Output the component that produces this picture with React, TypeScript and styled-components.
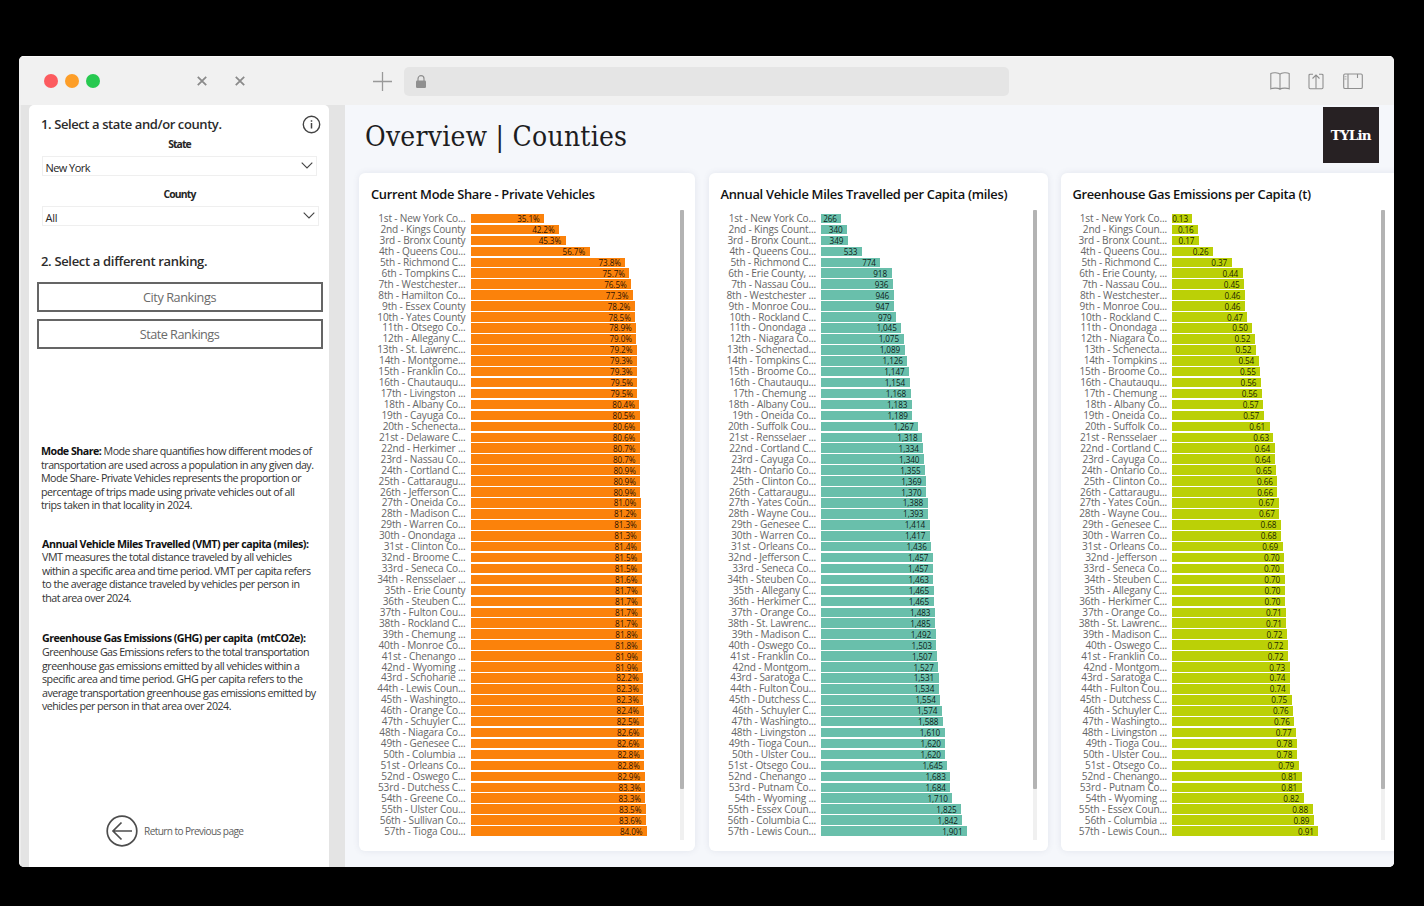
import { useLayoutEffect, useRef, useState } from 'react'
import type { ReactNode } from 'react'
import styled, { createGlobalStyle } from 'styled-components'

const GlobalStyle = createGlobalStyle`
  * {
    box-sizing: border-box;
  }

  body {
    margin: 0;
    background: #000;
    font-family: 'Open Sans', 'Noto Sans', sans-serif;
  }
`

const Desktop = styled.div`
  height: 906px;
  padding: 56px 30px 39px 19px;
  overflow: hidden;
  background: #000;
`

const BrowserWindow = styled.div`
  display: flex;
  flex-direction: column;
  width: 1375px;
  height: 811px;
  border-radius: 5px;
  overflow: hidden;
  background: #f1f1f1;
`

const Toolbar = styled.header`
  display: flex;
  align-items: center;
  flex: none;
  height: 49px;
  padding: 0 31.5px 0 25px;
  background: #f1f1f1;
  border-top: 1px solid #fafafa;
`

const Lights = styled.div`
  display: flex;
  gap: 7px;
  width: 153px;
`

const Light = styled.span<{ $color: string }>`
  width: 14px;
  height: 14px;
  border-radius: 50%;
  background: ${(p) => p.$color};
`

const TabMarks = styled.div`
  display: flex;
  gap: 27.5px;
  width: 176px;
`

const AddressBar = styled.div`
  display: flex;
  align-items: center;
  width: 605px;
  height: 29px;
  margin-left: 12px;
  padding-left: 12px;
  border-radius: 5px;
  background: #e5e5e5;
`

const ToolIcons = styled.div`
  display: flex;
  align-items: center;
  gap: 18.5px;
  margin-left: auto;
`

const Body = styled.div`
  display: flex;
  flex: 1;
  min-height: 0;
  padding-left: 2px;
  background: #ededed;
`

const Gutter = styled.div`
  display: flex;
  flex: none;
  width: 324px;
  padding-left: 8px;
  background: #e4e4e4;
`

const Sidebar = styled.aside`
  width: 300px;
  padding: 9px 0 0 12px;
  border-radius: 5px 5px 0 0;
  background: #fff;
`

const StepRow = styled.div<{ $top?: number }>`
  display: flex;
  align-items: center;
  justify-content: space-between;
  height: 20px;
  margin-top: ${(p) => p.$top ?? 0}px;
  padding-right: 8px;
  font-size: 13px;
  font-weight: 600;
  color: #2b2b2b;
`

const FieldLabel = styled.div<{ $top: number }>`
  display: flex;
  justify-content: center;
  width: 277px;
  height: 14px;
  margin-top: ${(p) => p.$top}px;
  font-size: 10.4px;
  line-height: 14px;
  font-weight: 700;
  color: #252525;
`

const SelectBox = styled.div<{ $top: number; $width: number }>`
  display: flex;
  align-items: center;
  justify-content: space-between;
  width: ${(p) => p.$width}px;
  height: 20px;
  margin-top: ${(p) => p.$top}px;
  margin-left: 1px;
  padding: 2px 3px 0 2.5px;
  border: 1px solid #efefef;
  font-size: 11px;
  color: #252525;

  svg {
    margin-top: -3px;
  }
`

const RankingButtons = styled.div`
  display: flex;
  flex-direction: column;
  gap: 7px;
  width: 286px;
  margin: 11px 0 0 -4.5px;
`

const RankingButton = styled.button`
  display: flex;
  align-items: center;
  justify-content: center;
  height: 30px;
  padding: 0;
  border: 2px solid #656565;
  background: #fff;
  font-family: inherit;
  font-size: 12.7px;
  color: #6b6b6b;
`

const Definition = styled.div<{ $top: number; $indent?: number }>`
  margin-top: ${(p) => p.$top}px;
  margin-left: ${(p) => p.$indent ?? 0}px;
  font-size: 10.7px;
  line-height: 13.6px;
  color: #333;

  b {
    color: #111;
  }
`

const DefinitionLine = styled.div`
  height: 13.6px;
  white-space: pre;
`

const BackLink = styled.div`
  display: flex;
  align-items: center;
  gap: 6px;
  margin: 101px 0 0 65px;
  font-size: 10.1px;
  color: #606060;
`

const Main = styled.main`
  flex: 1;
  min-width: 0;
  padding-left: 14px;
  background: #f5f7fb;
`

const PageHeader = styled.div`
  display: flex;
  justify-content: space-between;
  height: 68px;
  padding: 2px 15.5px 0 6px;
`

const PageTitle = styled.h1`
  margin: 0;
  font-family: 'DejaVu Serif Condensed', 'DejaVu Serif', serif;
  font-stretch: condensed;
  font-size: 28px;
  line-height: 59px;
  font-weight: 400;
  color: #1d1d1f;
`

const Logo = styled.div`
  display: flex;
  align-items: center;
  justify-content: center;
  width: 55.5px;
  height: 56px;
  background: #272123;
  color: #fff;
  font-family: 'DejaVu Serif', serif;
  font-size: 13.5px;
  font-weight: 700;
`

const Panels = styled.div`
  display: flex;
  width: 1064px;
`

const Panel = styled.section<{ $width: number; $gap: number }>`
  flex: none;
  width: ${(p) => p.$width}px;
  height: 678px;
  margin-right: ${(p) => p.$gap}px;
  padding: 11px 0 0 12px;
  border-radius: 6px;
  background: #fff;
  box-shadow: 0 0 6px rgba(90, 100, 130, 0.12);
`

const PanelTitle = styled.h2`
  height: 20px;
  margin: 0;
  font-size: 12.9px;
  line-height: 20px;
  font-weight: 600;
  color: #111;
`

const ChartArea = styled.div`
  display: flex;
  justify-content: space-between;
  height: 630px;
  margin-top: 6px;
`

const Rows = styled.div`
  padding-top: 3.1px;
`

const Row = styled.div<{ $label: number }>`
  display: grid;
  grid-template-columns: ${(p) => p.$label}px 200px;
  column-gap: 5px;
  align-items: center;
  height: 10.945px;
`

const RowLabel = styled.span`
  overflow: visible;
  text-align: right;
  white-space: pre;
  font-size: 10.1px;
  line-height: 10.9px;
  letter-spacing: -0.16px;
  color: #666;
`

const Bar = styled.div<{ $color: string }>`
  display: flex;
  align-items: center;
  justify-content: flex-end;
  height: 9.6px;
  padding-right: 4.5px;
  background: ${(p) => p.$color};
  font-size: 8.2px;
  line-height: 9px;
  letter-spacing: -0.1px;
  color: rgba(0, 0, 0, 0.88);
`

const Track = styled.div<{ $right: number }>`
  width: 4px;
  height: 630px;
  margin-right: ${(p) => p.$right}px;
  background: #f0f0f0;
`

const Thumb = styled.div`
  height: 579px;
  border-radius: 1px;
  background: #b3b3b3;
`

// Spreads the letters so that the text takes exactly the given width.
const Fitted = styled.span`
  display: inline-block;
  white-space: pre;
`

const Fit = ({ width, children }: { width: number; children: ReactNode }) => {
  const ref = useRef<HTMLSpanElement>(null)
  const [spacing, setSpacing] = useState(0)

  useLayoutEffect(() => {
    const el = ref.current
    if (!el) return
    const gaps = (el.textContent ?? '').length - 1
    setSpacing((width - el.getBoundingClientRect().width) / gaps)
  }, [width])

  return (
    <Fitted ref={ref} style={{ letterSpacing: spacing }}>
      {children}
    </Fitted>
  )
}

const modeShare: [string, number][] = [
  ['1st - New York Co...', 35.1],
  ['2nd - Kings County', 42.2],
  ['3rd - Bronx County', 45.3],
  ['4th - Queens Cou...', 56.7],
  ['5th - Richmond C...', 73.8],
  ['6th - Tompkins C...', 75.7],
  ['7th - Westchester...', 76.5],
  ['8th - Hamilton Co...', 77.3],
  ['9th - Essex County', 78.2],
  ['10th - Yates County', 78.5],
  ['11th - Otsego Co...', 78.9],
  ['12th - Allegany C...', 79.0],
  ['13th - St. Lawrenc...', 79.2],
  ['14th - Montgome...', 79.3],
  ['15th - Franklin Co...', 79.3],
  ['16th - Chautauqu...', 79.5],
  ['17th - Livingston ...', 79.5],
  ['18th - Albany Co...', 80.4],
  ['19th - Cayuga Co...', 80.5],
  ['20th - Schenecta...', 80.6],
  ['21st - Delaware C...', 80.6],
  ['22nd - Herkimer ...', 80.7],
  ['23rd - Nassau Co...', 80.7],
  ['24th - Cortland C...', 80.9],
  ['25th - Cattaraugu...', 80.9],
  ['26th - Jefferson C...', 80.9],
  ['27th - Oneida Co...', 81.0],
  ['28th - Madison C...', 81.2],
  ['29th - Warren Co...', 81.3],
  ['30th - Onondaga ...', 81.3],
  ['31st - Clinton Co...', 81.4],
  ['32nd - Broome C...', 81.5],
  ['33rd - Seneca Co...', 81.5],
  ['34th - Rensselaer ...', 81.6],
  ['35th - Erie County', 81.7],
  ['36th - Steuben C...', 81.7],
  ['37th - Fulton Cou...', 81.7],
  ['38th - Rockland C...', 81.7],
  ['39th - Chemung ...', 81.8],
  ['40th - Monroe Co...', 81.8],
  ['41st - Chenango ...', 81.9],
  ['42nd - Wyoming ...', 81.9],
  ['43rd - Schoharie ...', 82.2],
  ['44th - Lewis Coun...', 82.3],
  ['45th - Washingto...', 82.3],
  ['46th - Orange Co...', 82.4],
  ['47th - Schuyler C...', 82.5],
  ['48th - Niagara Co...', 82.6],
  ['49th - Genesee C...', 82.6],
  ['50th - Columbia ...', 82.8],
  ['51st - Orleans Co...', 82.8],
  ['52nd - Oswego C...', 82.9],
  ['53rd - Dutchess C...', 83.3],
  ['54th - Greene Co...', 83.3],
  ['55th - Ulster Cou...', 83.5],
  ['56th - Sullivan Co...', 83.6],
  ['57th - Tioga Cou...', 84.0],
]

// miles label, miles, emissions label, tonnes
const travel: [string, number, string, string][] = [
  ['1st - New York Co...', 266, '1st - New York Co...', '0.13'],
  ['2nd - Kings Count...', 340, '2nd - Kings Coun...', '0.16'],
  ['3rd - Bronx Count...', 349, '3rd - Bronx Count...', '0.17'],
  ['4th - Queens Cou...', 533, '4th - Queens Cou...', '0.26'],
  ['5th - Richmond C...', 774, '5th - Richmond C...', '0.37'],
  ['6th - Erie County, ...', 918, '6th - Erie County, ...', '0.44'],
  ['7th - Nassau Cou...', 936, '7th - Nassau Cou...', '0.45'],
  ['8th - Westchester ...', 946, '8th - Westchester...', '0.46'],
  ['9th - Monroe Cou...', 947, '9th - Monroe Cou...', '0.46'],
  ['10th - Rockland C...', 979, '10th - Rockland C...', '0.47'],
  ['11th - Onondaga ...', 1045, '11th - Onondaga ...', '0.50'],
  ['12th - Niagara Co...', 1075, '12th - Niagara Co...', '0.52'],
  ['13th - Schenectad...', 1089, '13th - Schenecta...', '0.52'],
  ['14th - Tompkins C...', 1126, '14th - Tompkins ...', '0.54'],
  ['15th - Broome Co...', 1147, '15th - Broome Co...', '0.55'],
  ['16th - Chautauqu...', 1154, '16th - Chautauqu...', '0.56'],
  ['17th - Chemung ...', 1168, '17th - Chemung ...', '0.56'],
  ['18th - Albany Cou...', 1183, '18th - Albany Co...', '0.57'],
  ['19th - Oneida Co...', 1189, '19th - Oneida Co...', '0.57'],
  ['20th - Suffolk Cou...', 1267, '20th - Suffolk Co...', '0.61'],
  ['21st - Rensselaer ...', 1318, '21st - Rensselaer ...', '0.63'],
  ['22nd - Cortland C...', 1334, '22nd - Cortland C...', '0.64'],
  ['23rd - Cayuga Co...', 1340, '23rd - Cayuga Co...', '0.64'],
  ['24th - Ontario Co...', 1355, '24th - Ontario Co...', '0.65'],
  ['25th - Clinton Co...', 1369, '25th - Clinton Co...', '0.66'],
  ['26th - Cattaraugu...', 1370, '26th - Cattaraugu...', '0.66'],
  ['27th - Yates Coun...', 1388, '27th - Yates Coun...', '0.67'],
  ['28th - Wayne Cou...', 1393, '28th - Wayne Cou...', '0.67'],
  ['29th - Genesee C...', 1414, '29th - Genesee C...', '0.68'],
  ['30th - Warren Co...', 1417, '30th - Warren Co...', '0.68'],
  ['31st - Orleans Co...', 1436, '31st - Orleans Co...', '0.69'],
  ['32nd - Jefferson C...', 1457, '32nd - Jefferson ...', '0.70'],
  ['33rd - Seneca Co...', 1457, '33rd - Seneca Co...', '0.70'],
  ['34th - Steuben Co...', 1463, '34th - Steuben C...', '0.70'],
  ['35th - Allegany C...', 1465, '35th - Allegany C...', '0.70'],
  ['36th - Herkimer C...', 1465, '36th - Herkimer C...', '0.70'],
  ['37th - Orange Co...', 1483, '37th - Orange Co...', '0.71'],
  ['38th - St. Lawrenc...', 1485, '38th - St. Lawrenc...', '0.71'],
  ['39th - Madison C...', 1492, '39th - Madison C...', '0.72'],
  ['40th - Oswego Co...', 1503, '40th - Oswego C...', '0.72'],
  ['41st - Franklin Co...', 1507, '41st - Franklin Co...', '0.72'],
  ['42nd - Montgom...', 1527, '42nd - Montgom...', '0.73'],
  ['43rd - Saratoga C...', 1531, '43rd - Saratoga C...', '0.74'],
  ['44th - Fulton Cou...', 1534, '44th - Fulton Cou...', '0.74'],
  ['45th - Dutchess C...', 1554, '45th - Dutchess C...', '0.75'],
  ['46th - Schuyler C...', 1574, '46th - Schuyler C...', '0.76'],
  ['47th - Washingto...', 1588, '47th - Washingto...', '0.76'],
  ['48th - Livingston ...', 1610, '48th - Livingston ...', '0.77'],
  ['49th - Tioga Coun...', 1620, '49th - Tioga Cou...', '0.78'],
  ['50th - Ulster Cou...', 1620, '50th - Ulster Cou...', '0.78'],
  ['51st - Otsego Cou...', 1645, '51st - Otsego Co...', '0.79'],
  ['52nd - Chenango ...', 1683, '52nd - Chenango...', '0.81'],
  ['53rd - Putnam Co...', 1684, '53rd - Putnam Co...', '0.81'],
  ['54th - Wyoming ...', 1710, '54th - Wyoming ...', '0.82'],
  ['55th - Essex Coun...', 1825, '55th - Essex Coun...', '0.88'],
  ['56th - Columbia C...', 1842, '56th - Columbia ...', '0.89'],
  ['57th - Lewis Coun...', 1901, '57th - Lewis Coun...', '0.91'],
]

type ChartRow = { label: string; value: string; width: number }

const modeRows: ChartRow[] = modeShare.map(([label, share]) => ({
  label,
  value: `${share.toFixed(1)}%`,
  width: share * 2.1,
}))

const milesRows: ChartRow[] = travel.map(([label, miles]) => ({
  label,
  value: miles.toLocaleString('en-US'),
  width: miles * 0.0768,
}))

// emissions follow the miles, so the unrounded miles give the bar length
const emissionRows: ChartRow[] = travel.map(([, miles, label, value]) => ({
  label,
  value,
  width: miles * 0.077,
}))

interface RankingPanelProps {
  title: string
  titleWidth: number
  rows: ChartRow[]
  color: string
  width: number
  gap: number
  label: number
  scrollRight: number
}

const RankingPanel = (p: RankingPanelProps) => (
  <Panel $width={p.width} $gap={p.gap}>
    <PanelTitle>
      <Fit width={p.titleWidth}>{p.title}</Fit>
    </PanelTitle>
    <ChartArea>
      <Rows>
        {p.rows.map((row) => (
          <Row key={row.label} $label={p.label}>
            <RowLabel>{row.label}</RowLabel>
            <Bar $color={p.color} style={{ width: row.width }}>
              {row.value}
            </Bar>
          </Row>
        ))}
      </Rows>
      <Track $right={p.scrollRight}>
        <Thumb />
      </Track>
    </ChartArea>
  </Panel>
)

const CloseMark = () => (
  <svg width="10" height="10" viewBox="0 0 10 10" fill="none">
    <path d="M.8.8l8.400 8.400M9.200.8L.8 9.200" stroke="#8b8b8b" strokeWidth="1.8" />
  </svg>
)

const Chevron = () => (
  <svg width="12" height="7" viewBox="0 0 12 7" fill="none">
    <path d="M.7.7L6 6 11.3.7" stroke="#444" strokeWidth="1.1" />
  </svg>
)

const App = () => (
  <Desktop>
    <GlobalStyle />
    <BrowserWindow>
      <Toolbar>
        <Lights>
          <Light $color="#fc5b5f" />
          <Light $color="#fd9e28" />
          <Light $color="#27c950" />
        </Lights>
        <TabMarks>
          <CloseMark />
          <CloseMark />
        </TabMarks>
        <svg width="19" height="19" viewBox="0 0 19 19" fill="none">
          <path d="M9.5 0v19M0 9.5h19" stroke="#999" strokeWidth="1.3" />
        </svg>
        <AddressBar>
          <svg width="10" height="13" viewBox="0 0 10 13" fill="none">
            <rect y="5.5" width="10" height="7.5" rx="1.2" fill="#8f8f8f" />
            <path
              d="M2 6V3.7a3 3 0 0 1 6 0V6"
              stroke="#8f8f8f"
              strokeWidth="1.2"
            />
          </svg>
        </AddressBar>
        <ToolIcons>
          <svg width="20" height="18" viewBox="0 0 20 18" fill="none">
            <path
              d="M10 2.2C8.5.6 3 .3.8 1.5v15.3c2.4-1 7.4-.9 9.2.4 1.8-1.3 6.8-1.4 9.2-.4V1.5C17 .3 11.5.6 10 2.2zM10 2.2v15"
              stroke="#8f8f8f"
              strokeWidth="1.1"
            />
          </svg>
          <svg
            width="16"
            height="18"
            viewBox="0 0 16 18"
            fill="none"
            stroke="#8f8f8f"
            strokeWidth="1.1"
          >
            <path d="M5 2.2H2.2Q1 2.2 1 3.4V15.500Q1 16.700 2.200 16.700H13.800Q15 16.700 15 15.500V3.400Q15 2.200 13.800 2.200H11" />
            <path d="M8 16.500V3M4.500 6.500L8 3l3.500 3.500" />
          </svg>
          <svg
            width="20"
            height="18"
            viewBox="0 0 20 18"
            fill="none"
            stroke="#8f8f8f"
            strokeWidth="1.1"
          >
            <rect x=".7" y="2" width="18.6" height="14.5" rx="1.3" />
            <path d="M5 2v14.500M14.500 2v4" />
            <path d="M1.500 4.700h2M1.500 7h2" strokeWidth=".7" />
          </svg>
        </ToolIcons>
      </Toolbar>

      <Body>
        <Gutter>
          <Sidebar>
            <StepRow>
              <Fit width={181}>1. Select a state and/or county.</Fit>
              <svg width="19" height="19" viewBox="0 0 19 19" fill="none">
                <circle cx="9.5" cy="9.5" r="8.2" stroke="#444" strokeWidth="1.4" />
                <path d="M9.5 8v5.500M9.500 5.200v1.500" stroke="#444" strokeWidth="1.500" />
              </svg>
            </StepRow>
            <FieldLabel $top={3}>
              <Fit width={23.5}>State</Fit>
            </FieldLabel>
            <SelectBox $top={5} $width={275}>
              <Fit width={45}>New York</Fit>
              <Chevron />
            </SelectBox>
            <FieldLabel $top={11}>
              <Fit width={33}>County</Fit>
            </FieldLabel>
            <SelectBox $top={5} $width={277}>
              <Fit width={12}>All</Fit>
              <Chevron />
            </SelectBox>
            <StepRow $top={25}>
              <Fit width={166.5}>2. Select a different ranking.</Fit>
            </StepRow>
            <RankingButtons>
              <RankingButton>
                <Fit width={73.5}>City Rankings</Fit>
              </RankingButton>
              <RankingButton>
                <Fit width={80}>State Rankings</Fit>
              </RankingButton>
            </RankingButtons>

            <Definition $top={96}>
              <DefinitionLine>
                <Fit width={271}>
                  <b>Mode Share:</b> Mode share quantifies how different modes of
                </Fit>
              </DefinitionLine>
              <DefinitionLine>
                <Fit width={273}>
                  transportation are used across a population in any given day.
                </Fit>
              </DefinitionLine>
              <DefinitionLine>
                <Fit width={260.5}>
                  Mode Share- Private Vehicles represents the proportion or
                </Fit>
              </DefinitionLine>
              <DefinitionLine>
                <Fit width={254}>
                  percentage of trips made using private vehicles out of all
                </Fit>
              </DefinitionLine>
              <DefinitionLine>
                <Fit width={151.5}>trips taken in that locality in 2024.</Fit>
              </DefinitionLine>
            </Definition>

            <Definition $top={24.7} $indent={1}>
              <DefinitionLine>
                <Fit width={267}>
                  <b>Annual Vehicle Miles Travelled (VMT) per capita (miles):</b>
                </Fit>
              </DefinitionLine>
              <DefinitionLine>
                <Fit width={250}>
                  VMT measures the total distance traveled by all vehicles
                </Fit>
              </DefinitionLine>
              <DefinitionLine>
                <Fit width={269}>
                  within a specific area and time period. VMT per capita refers
                </Fit>
              </DefinitionLine>
              <DefinitionLine>
                <Fit width={258}>
                  to the average distance traveled by vehicles per person in
                </Fit>
              </DefinitionLine>
              <DefinitionLine>
                <Fit width={89.5}>that area over 2024.</Fit>
              </DefinitionLine>
            </Definition>

            <Definition $top={26.7} $indent={1}>
              <DefinitionLine>
                <Fit width={264}>
                  <b>{'Greenhouse Gas Emissions (GHG) per capita  (mtCO2e):'}</b>
                </Fit>
              </DefinitionLine>
              <DefinitionLine>
                <Fit width={267.5}>
                  Greenhouse Gas Emissions refers to the total transportation
                </Fit>
              </DefinitionLine>
              <DefinitionLine>
                <Fit width={258}>
                  greenhouse gas emissions emitted by all vehicles within a
                </Fit>
              </DefinitionLine>
              <DefinitionLine>
                <Fit width={261}>
                  specific area and time period. GHG per capita refers to the
                </Fit>
              </DefinitionLine>
              <DefinitionLine>
                <Fit width={274}>
                  average transportation greenhouse gas emissions emitted by
                </Fit>
              </DefinitionLine>
              <DefinitionLine>
                <Fit width={189.5}>vehicles per person in that area over 2024.</Fit>
              </DefinitionLine>
            </Definition>

            <BackLink>
              <svg width="32" height="32" viewBox="0 0 32 32" fill="none">
                <circle cx="16" cy="16" r="14.8" stroke="#4d4d4d" strokeWidth="1.7" />
                <path
                  d="M26 16H7M15.500 7.500L7 16l8.500 8.500"
                  stroke="#4d4d4d"
                  strokeWidth="1.7"
                />
              </svg>
              <Fit width={100}>Return to Previous page</Fit>
            </BackLink>
          </Sidebar>
        </Gutter>

        <Main>
          <PageHeader>
            <PageTitle>
              <Fit width={262}>Overview | Counties</Fit>
            </PageTitle>
            <Logo>
              <Fit width={41}>TYLin</Fit>
            </Logo>
          </PageHeader>
          <Panels>
            <RankingPanel
              title="Current Mode Share - Private Vehicles"
              titleWidth={224}
              rows={modeRows}
              color="#fb820b"
              width={336}
              gap={13.5}
              label={94.5}
              scrollRight={11}
            />
            <RankingPanel
              title="Annual Vehicle Miles Travelled per Capita (miles)"
              titleWidth={287}
              rows={milesRows}
              color="#69bfab"
              width={339.5}
              gap={12.5}
              label={95.5}
              scrollRight={11}
            />
            <RankingPanel
              title="Greenhouse Gas Emissions per Capita (t)"
              titleWidth={238.5}
              rows={emissionRows}
              color="#bbd006"
              width={345}
              gap={0}
              label={94.5}
              scrollRight={20.5}
            />
          </Panels>
        </Main>
      </Body>
    </BrowserWindow>
  </Desktop>
)

export default App
